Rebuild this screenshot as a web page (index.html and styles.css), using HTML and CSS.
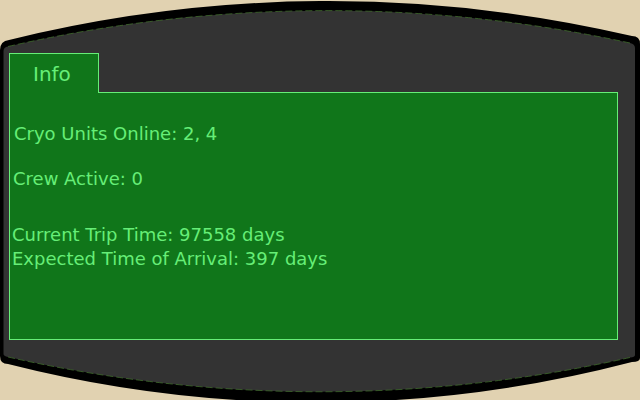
FILE: index.html
```html
<!DOCTYPE html>
<html>
<head>
<meta charset="utf-8">
<link rel="stylesheet" href="styles.css">
</head>
<body>
<div class="stage">
  <svg class="frame" width="640" height="400" viewBox="0 0 640 400" xmlns="http://www.w3.org/2000/svg">
    <path d="M0,356 L0,50 Q0,41 9,40 A1334,1334 0 0 1 632,36 Q640,36 640,44 L640,358 Q640,362 632,362 A1251,1251 0 0 1 8,364 Q0,364 0,356 Z" fill="#000"/>
    <path d="M3.5,354 L3.5,51 Q3.5,47 8,46.5 A1435,1435 0 0 1 630,43 Q635,44 635,48 L635,355 Q635,357 630,357.5 A1419,1419 0 0 1 8,357 Q3.5,356 3.5,354 Z" fill="#333333"/>
    <path d="M8,46.5 A1435,1435 0 0 1 630,43" fill="none" stroke="#3f6a2c" stroke-width="1" stroke-dasharray="7 3" opacity="0.8"/>
    <path d="M630,357.5 A1419,1419 0 0 1 8,357" fill="none" stroke="#3f6a2c" stroke-width="1" stroke-dasharray="7 3" opacity="0.8"/>
  </svg>
  <div class="screen">
    <div class="tab">Info</div>
    <div class="panel">
      <p class="line l1">Cryo Units Online: 2, 4</p>
      <p class="line l2">Crew Active: 0</p>
      <p class="line l3">Current Trip Time: 97558 days</p>
      <p class="line l4">Expected Time of Arrival: 397 days</p>
    </div>
  </div>
</div>
</body>
</html>
```

FILE: styles.css
```css
html, body {
  margin: 0;
  padding: 0;
  background: #e1d2b1;
}

.stage {
  display: grid;
  width: 640px;
  height: 400px;
  overflow: hidden;
  font-family: "DejaVu Sans", "Liberation Sans", sans-serif;
  color: #66ee77;
}

.stage > * {
  grid-area: 1 / 1;
}

.frame {
  display: block;
}

.screen {
  padding: 53px 0 0 9px;
}

.tab {
  position: relative;
  z-index: 1;
  box-sizing: border-box;
  width: 90px;
  height: 40px;
  margin-bottom: -1px;
  padding: 8px 0 0 23px;
  border: 1px solid #66ee77;
  border-bottom: none;
  background: #10761a;
  font-size: 20px;
  line-height: 24px;
}

.panel {
  box-sizing: border-box;
  width: 609px;
  height: 248px;
  padding: 29px 0 0 1px;
  border: 1px solid #66ee77;
  background: #10761a;
  font-size: 18px;
  line-height: 24px;
}

.line {
  margin: 0;
  white-space: nowrap;
}

.l1 { margin-left: 3px; }
.l2 { margin-left: 2px; margin-top: 21px; }
.l3 { margin-left: 1px; margin-top: 32px; }
.l4 { margin-left: 1px; }
```
